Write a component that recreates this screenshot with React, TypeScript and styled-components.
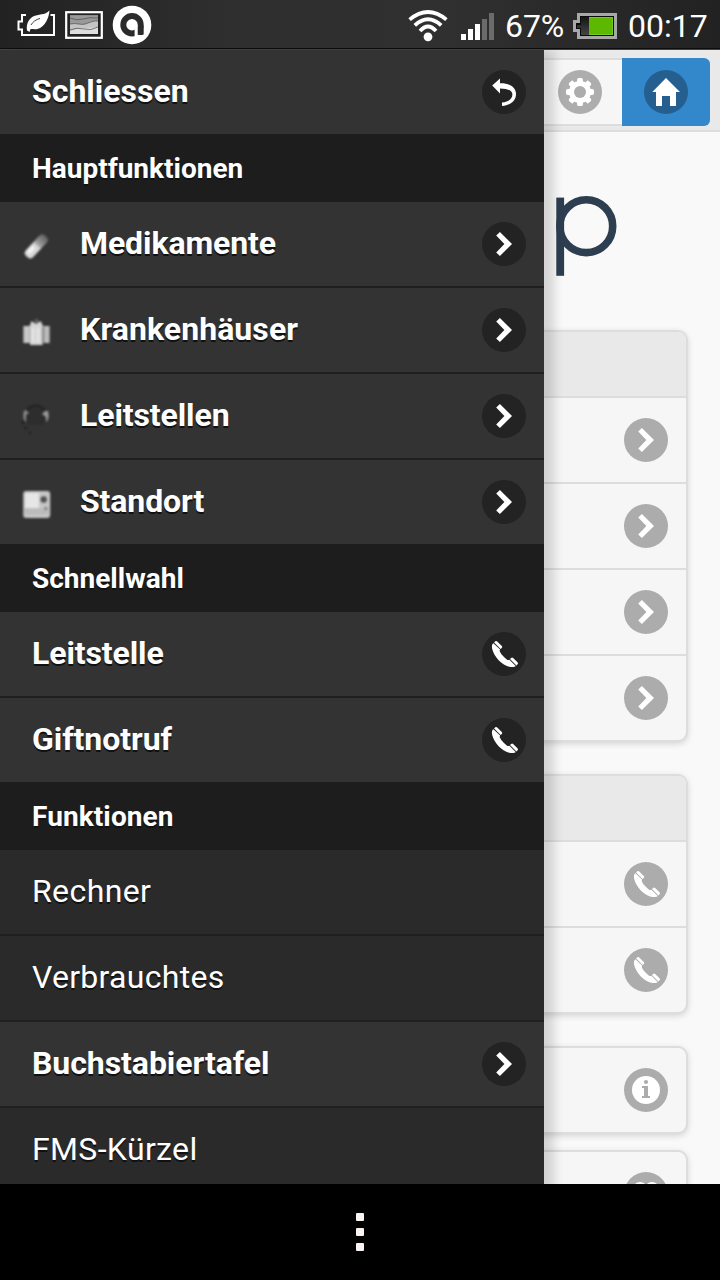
import React from "react";
import styled, { createGlobalStyle } from "styled-components";

const GlobalStyle = createGlobalStyle`
  * { box-sizing: border-box; }
  body { margin: 0; background: #000; font-family: Roboto, "Liberation Sans", sans-serif; }
`;

const Screen = styled.div`
  display: flex;
  flex-direction: column;
  width: 720px;
  height: 1280px;
  overflow: hidden;
  background: #000;
`;

const StatusBar = styled.header`
  display: flex;
  align-items: flex-start;
  justify-content: space-between;
  height: 49px;
  flex: none;
  background: linear-gradient(90deg, #222 0, #2f2f2f 33%, #303030 62%, #222 100%);
  border-bottom: 1px solid #0c0c0c;
  color: #fff;
`;

const StatusGroup = styled.div`
  display: flex;
  height: 48px;
  svg { display: block; flex: none; }
`;

const StatusText = styled.span<{ $width: number; $spacing?: number }>`
  width: ${(p) => p.$width}px;
  font-size: 32px;
  line-height: 52px;
  letter-spacing: ${(p) => p.$spacing ?? 0}px;
  white-space: nowrap;
`;

const Stage = styled.div`
  position: relative;
  height: 1135px;
  flex: none;
  padding-top: 1px;
  overflow: hidden;
  background: #444;
`;

const Page = styled.main`
  height: 1134px;
  overflow: hidden;
  background: #f9f9f9;
`;

const Toolbar = styled.div`
  display: flex;
  justify-content: flex-end;
  height: 82px;
  padding: 8px 10px 0;
  background: #e9e9e9;
  border-bottom: 2px solid #ddd;
`;

const ToolButton = styled.div<{ $active?: boolean }>`
  display: flex;
  align-items: center;
  justify-content: center;
  width: 88px;
  height: 68px;
  background: ${(p) => (p.$active ? "#3388cc" : "#f6f6f6")};
  border: solid ${(p) => (p.$active ? "#3388cc" : "#ddd")};
  border-width: 2px 0;
  border-radius: ${(p) => (p.$active ? "0 6px 6px 0" : "0")};
  padding-left: ${(p) => (p.$active ? 0 : 4)}px;
`;

const LogoArea = styled.div`
  display: flex;
  justify-content: flex-end;
  height: 198px;
  padding: 64px 100px 0 0;
`;

const Card = styled.section<{ $gap: number }>`
  margin: 0 32px ${(p) => p.$gap}px;
  border: 2px solid #ddd;
  border-radius: 10px;
  background: #f6f6f6;
  box-shadow: 0 2px 6px rgba(0, 0, 0, 0.15);
  overflow: hidden;
`;

const CardHeader = styled.div`
  height: 64px;
  background: #e9e9e9;
`;

const CardRow = styled.div`
  display: flex;
  align-items: center;
  justify-content: flex-end;
  height: 84px;
  padding-right: 18px;
  * + & { height: 86px; border-top: 2px solid #ddd; }
`;

const Menu = styled.nav`
  position: absolute;
  top: 1px;
  left: 0;
  width: 544px;
  height: 1160px;
  background: #2a2a2a;
  box-shadow: 10px 0 10px rgba(0, 0, 0, 0.15);
`;

const MenuDivider = styled.div<{ $spacing: number }>`
  display: flex;
  align-items: center;
  height: 68px;
  padding-left: 32px;
  background: #1d1d1d;
  color: #fff;
  font-size: 28px;
  font-weight: 700;
  letter-spacing: ${(p) => p.$spacing}px;
  text-shadow: 0 2px 0 #111;
`;

const MenuRow = styled.div<{ $plain?: boolean }>`
  display: flex;
  align-items: center;
  height: 84px;
  padding: 0 18px 0 ${(p) => (p.$plain ? 32 : 0)}px;
  background: ${(p) => (p.$plain ? "#2a2a2a" : "#333")};
  color: #fff;
  font-size: 32px;
  font-weight: ${(p) => (p.$plain ? 400 : 700)};
  text-shadow: 0 2px 0 #111;
  & + & { height: 86px; border-top: 2px solid #1f1f1f; }
`;

const RowIcon = styled.span<{ $empty?: boolean }>`
  display: flex;
  width: ${(p) => (p.$empty ? 32 : 80)}px;
  padding: ${(p) => (p.$empty ? 0 : "4px 0 0 20px")};
  svg { filter: blur(0.9px); }
`;

const RowLabel = styled.span<{ $spacing: number }>`
  flex: 1;
  padding-bottom: 2px;
  letter-spacing: ${(p) => p.$spacing}px;
`;

const NavBar = styled.footer`
  display: flex;
  flex: 1;
  flex-direction: column;
  align-items: center;
  justify-content: center;
  gap: 7px;
  background: #000;
`;

const Dot = styled.i`
  width: 8px;
  height: 8px;
  border-radius: 1px;
  background: #faf5f2;
`;

type Glyph = "back" | "chevron" | "phone" | "gear" | "home" | "info" | "heart";

const glyphs: Record<Glyph, React.ReactNode> = {
  back: (
    <path d="M10.2 15.6 18 8.4V13.2C27 13 34 17 34 24C34 31.5 27.5 35.6 20 36V32.6C26 32 30.4 29 30.4 24.4C30.4 20.5 25 18.4 18 18.4V23.4Z" />
  ),
  chevron: <path d="M17.9 10 30 22 17.9 34 14.2 30.4 22.4 22 14.2 13.6Z" />,
  phone: (
    <>
      <path d="M11.4 11.2C9.8 12.2 9.7 14.5 10.2 17C12 24.5 20 34 28.5 35C31 35.3 33 35 33.7 34L27.4 27.7C26.6 28.3 25.6 28.2 24.8 27.5C22 25.4 19.8 23 18.1 20C17.6 19 17.6 18.2 18.1 17.6Z" />
      <path d="M12.1 10.4 13.2 9.3Q14.2 8.5 15.2 9.4L19.8 13.9Q20.7 14.9 19.8 15.9L18.6 17Z" />
      <path d="M28 27.1 29.1 26Q30.1 25 31.1 26L35.5 30.3Q36.5 31.3 35.6 32.3L34.4 33.5Z" />
    </>
  ),
  gear: (
    <>
      {[0, 45, 90, 135].map((angle) => (
        <rect key={angle} x="19.1" y="8" width="5.8" height="28" rx="1.6" transform={`rotate(${angle} 22 22)`} />
      ))}
      <circle cx="22" cy="22" r="11" />
      <circle cx="22" cy="22" r="6" fill="#adadad" />
    </>
  ),
  home: <path d="M22 8 36 22H32V36H26V26H18V36H12V22H8.3Z" />,
  info: (
    <>
      <circle cx="22" cy="22" r="14" />
      <g fill="#acacac">
        <circle cx="22" cy="14" r="2.1" />
        <rect x="18" y="18" width="6" height="2" />
        <rect x="20" y="18" width="4" height="11" />
        <rect x="18" y="28" width="8" height="2" />
      </g>
    </>
  ),
  heart: <path d="M22 35 10 22C7 17 10 10 16 10C19 10 21 11.5 22 13.5C23 11.5 25 10 28 10C34 10 37 17 34 22Z" />,
};

function DiscIcon({ glyph, disc }: { glyph: Glyph; disc: string }) {
  return (
    <svg width="44" height="44" viewBox="0 0 44 44" fill="#fff">
      <circle cx="22" cy="22" r="22" fill={disc} />
      {glyphs[glyph]}
    </svg>
  );
}

function PillIcon() {
  return (
    <svg width="32" height="32" viewBox="0 0 32 32">
      <defs>
        <linearGradient id="pill" x1="0" y1="0" x2="1" y2="0">
          <stop offset="0" stopColor="#d8d8d8" />
          <stop offset="0.5" stopColor="#d8d8d8" />
          <stop offset="0.6" stopColor="#a0a0a0" />
          <stop offset="1" stopColor="#5c5c5c" />
        </linearGradient>
      </defs>
      <g transform="rotate(-47 16 16)">
        <rect x="2" y="11.5" width="28" height="10" rx="4" fill="url(#pill)" />
        <rect x="5" y="13" width="9" height="4" rx="2" fill="#fff" opacity="0.7" />
      </g>
    </svg>
  );
}

function HospitalIcon() {
  return (
    <svg width="32" height="32" viewBox="0 0 32 32">
      <rect x="3.4" y="10" width="7" height="17" fill="#c8c8c8" />
      <rect x="22.6" y="10" width="7" height="17" fill="#bcbcbc" />
      <path d="M10 9 11.5 5 16 8 20.5 5 22.6 9V29H10Z" fill="#d6d6d6" />
      <path d="M16.5 3V8" stroke="#777" strokeWidth="2" />
      <path d="M23.4 11V27" stroke="#777" strokeWidth="1.4" />
      <path d="M9.6 11V27" stroke="#aaa" strokeWidth="1" />
      <path d="M13 12V26M18 12V26" stroke="#eee" strokeWidth="1.5" />
    </svg>
  );
}

function HeadsetIcon() {
  return (
    <svg width="32" height="32" viewBox="0 0 32 32" fill="none">
      <rect x="7" y="5" width="18" height="18" rx="4" fill="#2d2d2d" />
      <path d="M7 9C9 2 22 2 25 9" stroke="#232323" strokeWidth="2" />
      <path d="M4 9C3 13 3 18 6 20V13L9 11 6 8Z" fill="#888" />
      <path d="M28 9C29 13 29 18 26 20V15L22 12 25 9Z" fill="#999" />
      <path d="M3 19V22M4.500 25.500L7 27M9 31H11" stroke="#1e1e1e" strokeWidth="2" />
    </svg>
  );
}

function LocationIcon() {
  return (
    <svg width="32" height="32" viewBox="0 0 32 32">
      <rect x="3.2" y="3" width="27" height="27" rx="3" fill="#c6c6c6" />
      <path d="M5 5H19V20H5Z" fill="#e6e6e6" />
      <path d="M4 22H29M5 25H29" stroke="#a8a8a8" strokeWidth="1" />
      <circle cx="23.7" cy="11.5" r="3.2" fill="#505050" />
      <circle cx="25.8" cy="20.5" r="1.8" fill="#888" />
    </svg>
  );
}

function NotificationIcons() {
  return (
    <svg width="160" height="48" viewBox="0 0 160 48" fill="none">
      <path d="M26 15H22V21.500H18.500V29.500H22V35H54V15H50.500" stroke="#fff" strokeWidth="2" />
      <path d="M27 30.500C26 25 28 19.500 33 16.500C38 13.800 45 15.500 49.500 10.500C49 18 45 27 37.500 29C34 29.800 31.500 28.500 30.300 29.500L29.500 32L28 31Z" fill="#fff" />
      <path d="M31 25C33 21.500 36 19.500 40 18.500" stroke="#444" strokeWidth="1" />
      <rect x="66.200" y="12.200" width="35.600" height="25.600" stroke="#fff" strokeWidth="2.200" fill="#222" />
      <rect x="70" y="15.500" width="28" height="18.500" fill="#dedede" />
      <path d="M70 15.500H98V21C91 20 86 26 79 24Q74 23 70 24Z" fill="#999" />
      <path d="M70 24Q74 23 79 24C86 26 91 20 98 21V27Q91 28 86 28Q77 28 70 31Z" fill="#c4c4c4" />
      <path d="M70 18Q77 21 83 19T98 18M70 24Q74 23 79 24C86 26 91 20 98 21M70 30Q77 27 84 29T98 27" stroke="#555" strokeWidth="0.8" />
      <circle cx="132" cy="25" r="19.3" fill="#fff" />
      <circle cx="132" cy="24.800" r="8.700" stroke="#2b2b2b" strokeWidth="6" />
      <rect x="137.700" y="25" width="6" height="10" rx="1.500" fill="#2b2b2b" />
      <rect x="134.600" y="25" width="3.100" height="13" fill="#fff" />
    </svg>
  );
}

function SignalIcons() {
  return (
    <svg width="97" height="48" viewBox="408 0 97 48" fill="none">
      <g stroke="#fff" strokeWidth="3.8">
        <path d="M409.600 19.600Q428 4.400 446.400 19.600" />
        <path d="M414.800 25.400Q428 13.200 441.200 25.400" />
        <path d="M420 31Q428 22 436 31" />
      </g>
      <circle cx="428" cy="36.8" r="4.4" fill="#fff" />
      <g fill="#fff">
        <rect x="461" y="34" width="5" height="6" />
        <rect x="468" y="29" width="5" height="11" />
        <rect x="475" y="24" width="5" height="16" />
      </g>
      <g fill="#6b6b6b">
        <rect x="482" y="19" width="5" height="21" />
        <rect x="489" y="13" width="5" height="27" />
      </g>
    </svg>
  );
}

function BatteryIcon() {
  return (
    <svg width="56" height="48" viewBox="572 0 56 48">
      <defs>
        <linearGradient id="cell" x1="0" y1="0" x2="0" y2="1">
          <stop offset="0" stopColor="#151515" />
          <stop offset="1" stopColor="#454545" />
        </linearGradient>
      </defs>
      <path d="M577 13H617V39H577V32H573V20H577Z" fill="#a8a8a8" />
      <path d="M580 16H614V36H580V29H576V23H580Z" fill="#0b0b0b" />
      <path d="M581 17H589V35H581V28H577V25H581Z" fill="url(#cell)" />
      <rect x="589" y="17" width="24" height="18" fill="#72cc20" />
      <rect x="589" y="18" width="23" height="16" fill="#5cb800" />
    </svg>
  );
}

function LogoMark() {
  return (
    <svg width="64" height="80" viewBox="556 196 64 80" fill="none">
      <rect x="556.3" y="197.6" width="7.8" height="78.2" fill="#2c3e50" />
      <circle cx="586.3" cy="226.2" r="26.4" stroke="#2c3e50" strokeWidth="7.6" />
    </svg>
  );
}

type Entry = { label: string; glyph?: Glyph; icon?: React.ReactNode; spacing?: number };

const sections: { title?: string; spacing?: number; entries: Entry[] }[] = [
  { entries: [{ label: "Schliessen", glyph: "back" }] },
  {
    title: "Hauptfunktionen",
    entries: [
      { label: "Medikamente", glyph: "chevron", icon: <PillIcon />, spacing: -0.1 },
      { label: "Krankenhäuser", glyph: "chevron", icon: <HospitalIcon />, spacing: 0.08 },
      { label: "Leitstellen", glyph: "chevron", icon: <HeadsetIcon />, spacing: -0.1 },
      { label: "Standort", glyph: "chevron", icon: <LocationIcon />, spacing: -0.1 },
    ],
  },
  {
    title: "Schnellwahl",
    entries: [
      { label: "Leitstelle", glyph: "phone", spacing: -0.1 },
      { label: "Giftnotruf", glyph: "phone", spacing: -0.06 },
    ],
  },
  {
    title: "Funktionen",
    spacing: 0.1,
    entries: [
      { label: "Rechner", spacing: 0.4 },
      { label: "Verbrauchtes", spacing: 0.28 },
      { label: "Buchstabiertafel", glyph: "chevron", spacing: -0.06 },
      { label: "FMS-Kürzel", spacing: 0.35 },
    ],
  },
];

const cards: { header: boolean; gap: number; rows: Glyph[] }[] = [
  { header: true, gap: 32, rows: ["chevron", "chevron", "chevron", "chevron"] },
  { header: true, gap: 32, rows: ["phone", "phone"] },
  { header: false, gap: 16, rows: ["info"] },
  { header: false, gap: 16, rows: ["heart"] },
];

export default function App() {
  return (
    <Screen>
      <GlobalStyle />
      <StatusBar>
        <StatusGroup>
          <NotificationIcons />
        </StatusGroup>
        <StatusGroup>
          <SignalIcons />
          <StatusText $width={67} $spacing={-0.1}>67%</StatusText>
          <BatteryIcon />
          <StatusText $width={92}>00:17</StatusText>
        </StatusGroup>
      </StatusBar>
      <Stage>
        <Page>
          <Toolbar>
            <ToolButton>
              <DiscIcon glyph="gear" disc="#adadad" />
            </ToolButton>
            <ToolButton $active>
              <DiscIcon glyph="home" disc="#245f8f" />
            </ToolButton>
          </Toolbar>
          <LogoArea>
            <LogoMark />
          </LogoArea>
          {cards.map((card, i) => (
            <Card key={i} $gap={card.gap}>
              {card.header && <CardHeader />}
              {card.rows.map((glyph, j) => (
                <CardRow key={j}>
                  <DiscIcon glyph={glyph} disc="#acacac" />
                </CardRow>
              ))}
            </Card>
          ))}
        </Page>
        <Menu>
          {sections.map((section, i) => (
            <React.Fragment key={i}>
              {section.title && <MenuDivider $spacing={section.spacing ?? 0}>{section.title}</MenuDivider>}
              {section.entries.map((entry) => (
                <MenuRow key={entry.label} $plain={!entry.glyph}>
                  {entry.glyph && <RowIcon $empty={!entry.icon}>{entry.icon}</RowIcon>}
                  <RowLabel $spacing={entry.spacing ?? 0}>{entry.label}</RowLabel>
                  {entry.glyph && <DiscIcon glyph={entry.glyph} disc="#232323" />}
                </MenuRow>
              ))}
            </React.Fragment>
          ))}
        </Menu>
      </Stage>
      <NavBar>
        <Dot />
        <Dot />
        <Dot />
      </NavBar>
    </Screen>
  );
}
